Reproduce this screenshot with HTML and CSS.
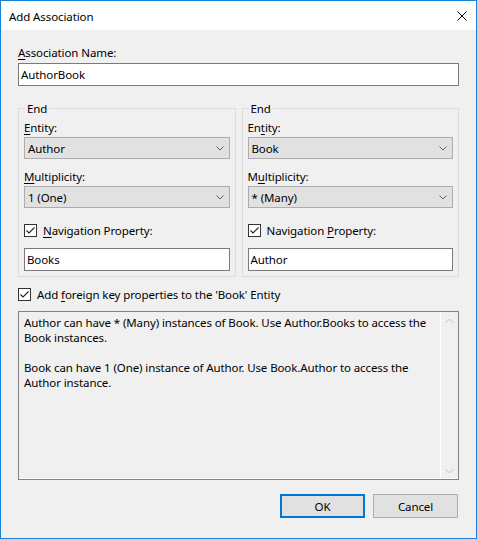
FILE: index.html
```html
<!DOCTYPE html>
<html>
<head>
<meta charset="utf-8">
<link rel="stylesheet" href="styles.css">
</head>
<body>
<div class="window">
  <div class="titlebar">
    <span class="title">Add Association</span>
    <svg class="close" width="10" height="10" viewBox="0 0 10 10"><path d="M0.5 0.5 L9.5 9.5 M9.5 0.5 L0.5 9.5" stroke="#000" stroke-width="1" fill="none"/></svg>
  </div>
  <div class="content">
    <div class="label"><u>A</u>ssociation Name:</div>
    <div class="textbox name">AuthorBook</div>
    <div class="groups">
      <fieldset class="group">
        <legend>End</legend>
        <div class="label first"><u>E</u>ntity:</div>
        <div class="combo"><span>Author</span><svg class="chev" width="8" height="5" viewBox="0 0 8 5"><path d="M0.5 0.5 L4 4 L7.5 0.5" stroke="#606060" fill="none"/></svg></div>
        <div class="label second"><u>M</u>ultiplicity:</div>
        <div class="combo"><span>1 (One)</span><svg class="chev" width="8" height="5" viewBox="0 0 8 5"><path d="M0.5 0.5 L4 4 L7.5 0.5" stroke="#606060" fill="none"/></svg></div>
        <div class="check nav"><span class="box"><svg width="11" height="11" viewBox="0 0 11 11"><path d="M1.5 5.5 L4 8 L9.5 2.5" stroke="#222" stroke-width="1.1" fill="none"/></svg></span><span><u>N</u>avigation Property:</span></div>
        <div class="textbox prop">Books</div>
      </fieldset>
      <fieldset class="group">
        <legend>End</legend>
        <div class="label first">En<u>t</u>ity:</div>
        <div class="combo"><span>Book</span><svg class="chev" width="8" height="5" viewBox="0 0 8 5"><path d="M0.5 0.5 L4 4 L7.5 0.5" stroke="#606060" fill="none"/></svg></div>
        <div class="label second">M<u>u</u>ltiplicity:</div>
        <div class="combo"><span>* (Many)</span><svg class="chev" width="8" height="5" viewBox="0 0 8 5"><path d="M0.5 0.5 L4 4 L7.5 0.5" stroke="#606060" fill="none"/></svg></div>
        <div class="check nav"><span class="box"><svg width="11" height="11" viewBox="0 0 11 11"><path d="M1.5 5.5 L4 8 L9.5 2.5" stroke="#222" stroke-width="1.1" fill="none"/></svg></span><span>Navigation <u>P</u>roperty:</span></div>
        <div class="textbox prop">Author</div>
      </fieldset>
    </div>
    <div class="check fk"><span class="box"><svg width="11" height="11" viewBox="0 0 11 11"><path d="M1.5 5.5 L4 8 L9.5 2.5" stroke="#222" stroke-width="1.1" fill="none"/></svg></span><span>Add <u>f</u>oreign key properties to the 'Book' Entity</span></div>
    <div class="info">
      <div class="info-text">
        <p>Author can have * (Many) instances of Book. Use Author.Books to access the Book instances.</p>
        <p>Book can have 1 (One) instance of Author. Use Book.Author to access the Author instance.</p>
      </div>
      <div class="scrollbar">
        <svg width="9" height="6" viewBox="0 0 9 6"><path d="M0.5 5 L4.5 1 L8.5 5" stroke="#c2c2c2" fill="none"/></svg>
        <svg width="9" height="6" viewBox="0 0 9 6"><path d="M0.5 1 L4.5 5 L8.5 1" stroke="#c2c2c2" fill="none"/></svg>
      </div>
    </div>
    <div class="buttons">
      <div class="btn default">OK</div>
      <div class="btn">Cancel</div>
    </div>
  </div>
</div>
</body>
</html>
```
FILE: styles.css
```css
* { box-sizing: border-box; }
html, body { margin: 0; padding: 0; }
body {
  font-family: "Noto Sans", "Open Sans", sans-serif;
  font-size: 11.5px;
  letter-spacing: -0.1px;
  color: #000;
  background: #f0f0f0;
}
.window {
  width: 477px;
  height: 539px;
  border: 1px solid #1883d7;
  background: #f0f0f0;
  display: flex;
  flex-direction: column;
}
.titlebar {
  height: 29px;
  background: #fff;
  display: flex;
  align-items: center;
  justify-content: space-between;
  padding: 0 9px 0 8px;
  flex: none;
}
.title { line-height: 15px; padding-top: 2px; }
.close { display: block; margin-top: 1px; }
.content {
  padding: 15px 17px 0 17px;
  display: flex;
  flex-direction: column;
  flex: 1;
}
.label { line-height: 15px; height: 15px; white-space: nowrap; }
.textbox {
  height: 23px;
  border: 1px solid #7a7a7a;
  background: #fff;
  line-height: 21px;
  padding: 0 4px 0 2px;
  white-space: nowrap;
}
.name { margin-top: 3px; }
.groups {
  margin-top: 15px;
  display: flex;
  gap: 6px;
}
.group {
  flex: 1;
  margin: 0;
  min-width: 0;
  border: 1px solid #dcdcdc;
  padding: 0 5px 5px 5px;
  display: flex;
  flex-direction: column;
}
.group legend {
  line-height: 15px;
  padding: 0 2px;
  margin-left: 1px;
}
.label.first { margin-top: 4px; }
.label.second { margin-top: 10px; }
.combo {
  margin-top: 2px;
  height: 22px;
  background: #e1e1e1;
  border: 1px solid #adadad;
  display: flex;
  align-items: center;
  justify-content: space-between;
  padding: 0 5px 0 3px;
  white-space: nowrap;
}
.chev { display: block; }
.check {
  display: flex;
  align-items: center;
  height: 15px;
  line-height: 15px;
  white-space: nowrap;
}
.box {
  width: 13px;
  height: 13px;
  border: 1px solid #333;
  background: #fff;
  display: flex;
  align-items: center;
  justify-content: center;
  margin-right: 6px;
  flex: none;
}
.box svg { display: block; }
.check.nav { margin-top: 15px; }
.prop { margin-top: 10px; }
.check.fk { margin-top: 10px; }
.info {
  margin-top: 9px;
  height: 169px;
  border: 1px solid #828282;
  display: flex;
  box-shadow: inset 0 -1px 0 #fff;
}
.info-text {
  flex: 1;
  padding: 3px 6px 0 5px;
  line-height: 15px;
}
.info-text p { margin: 0 0 15px 0; }
.scrollbar {
  width: 18px;
  border-left: 1px solid #fff;
  display: flex;
  flex-direction: column;
  justify-content: space-between;
  align-items: center;
  padding: 6px 0 4px 0;
  margin-bottom: 1px;
}
.scrollbar svg { display: block; }
.buttons {
  margin-top: 14px;
  margin-right: 1px;
  display: flex;
  justify-content: flex-end;
  gap: 8px;
}
.btn {
  width: 85px;
  height: 24px;
  background: #e1e1e1;
  border: 1px solid #adadad;
  display: flex;
  align-items: center;
  justify-content: center;
}
.btn.default { border: 2px solid #0078d7; }
u { text-decoration: underline; text-underline-offset: 2px; }
```
